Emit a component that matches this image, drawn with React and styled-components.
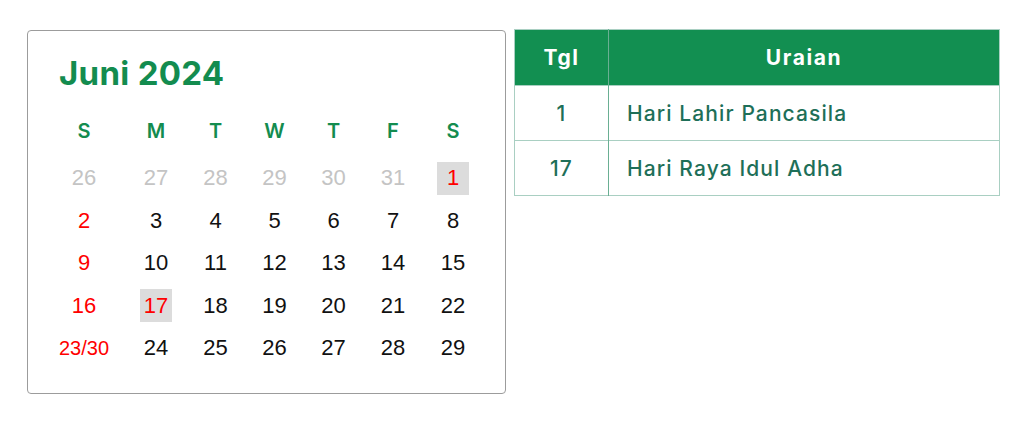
import React from "react";
import styled, { createGlobalStyle } from "styled-components";

const Global = createGlobalStyle`
  html, body { margin: 0; padding: 0; background: #fff; }
  body { font-family: Inter, "Noto Sans", sans-serif; }
`;

const Page = styled.div`
  display: flex;
  align-items: flex-start;
  gap: 8px;
  padding: 29px 0 0 27px;
`;

const Card = styled.div`
  box-sizing: border-box;
  width: 479px;
  height: 364px;
  margin-top: 1px;
  border: 1.5px solid #9c9c9c;
  border-radius: 4px;
  padding: 20px 0 0 14px;
`;

const Title = styled.h2`
  margin: 0 0 0 17px;
  font-family: Inter, sans-serif;
  font-weight: 700;
  font-size: 33px;
  line-height: 44px;
  color: #138c4f;
  letter-spacing: 0.3px;
`;

const Grid = styled.div`
  display: grid;
  grid-template-columns: 84px 60px 59px 59px 59px 60px 60px;
  grid-template-rows: 52px repeat(5, 42.5px);
  margin-top: 10px;
`;

const DayHead = styled.div`
  display: flex;
  align-items: center;
  justify-content: center;
  font-family: Inter, sans-serif;
  font-weight: 600;
  font-size: 20px;
  color: #138c4f;
`;

const Cell = styled.div`
  display: flex;
  align-items: center;
  justify-content: center;
`;

const Num = styled.span`
  display: flex;
  align-items: center;
  justify-content: center;
  min-width: 32px;
  height: 33px;
  font-family: "Liberation Sans", Arial, sans-serif;
  font-size: ${(p) => (p.$small ? "20px" : "22px")};
  color: ${(p) => (p.$tone === "muted" ? "#c4c4c4" : p.$tone === "red" ? "#ff0000" : "#111")};
  background: ${(p) => (p.$hl ? "#dcdcdc" : "transparent")};
`;

const Table = styled.table`
  width: 486px;
  border-collapse: collapse;
  border: 1.5px solid #a9cfc2;
  font-family: Inter, sans-serif;
`;

const Th = styled.th`
  background: #128f51;
  color: #fff;
  font-weight: 700;
  font-size: 21px;
  letter-spacing: 1.6px;
  height: 55px;
  padding: 0;
  text-align: center;
  border-right: ${(p) => (p.$divider ? "1px solid #6aaf93" : "none")};
  width: ${(p) => p.$w || "auto"};
`;

const Td = styled.td`
  height: 54px;
  padding: 0 ${(p) => (p.$center ? "0" : "18px")};
  text-align: ${(p) => (p.$center ? "center" : "left")};
  font-size: 21px;
  letter-spacing: 1.1px;
  font-weight: 500;
  color: #1e6f58;
  border-top: 1.5px solid #a9cfc2;
  border-right: ${(p) => (p.$divider ? "1px solid #6aaf93" : "none")};
`;

const days = ["S", "M", "T", "W", "T", "F", "S"];

const weeks = [
  [["26", "muted"], ["27", "muted"], ["28", "muted"], ["29", "muted"], ["30", "muted"], ["31", "muted"], ["1", "red", true]],
  [["2", "red"], ["3"], ["4"], ["5"], ["6"], ["7"], ["8"]],
  [["9", "red"], ["10"], ["11"], ["12"], ["13"], ["14"], ["15"]],
  [["16", "red"], ["17", "red", true], ["18"], ["19"], ["20"], ["21"], ["22"]],
  [["23/30", "red", false, true], ["24"], ["25"], ["26"], ["27"], ["28"], ["29"]],
];

const holidays = [
  ["1", "Hari Lahir Pancasila"],
  ["17", "Hari Raya Idul Adha"],
];

export default function App() {
  return (
    <>
      <Global />
      <Page>
        <Card>
          <Title>Juni 2024</Title>
          <Grid>
            {days.map((d, i) => (
              <DayHead key={i}>{d}</DayHead>
            ))}
            {weeks.flat().map(([n, tone, hl, small], i) => (
              <Cell key={i}>
                <Num $tone={tone} $hl={hl} $small={small}>
                  {n}
                </Num>
              </Cell>
            ))}
          </Grid>
        </Card>
        <Table>
          <thead>
            <tr>
              <Th $divider $w="93px">Tgl</Th>
              <Th>Uraian</Th>
            </tr>
          </thead>
          <tbody>
            {holidays.map(([d, t]) => (
              <tr key={d}>
                <Td $center $divider>
                  {d}
                </Td>
                <Td>{t}</Td>
              </tr>
            ))}
          </tbody>
        </Table>
      </Page>
    </>
  );
}
